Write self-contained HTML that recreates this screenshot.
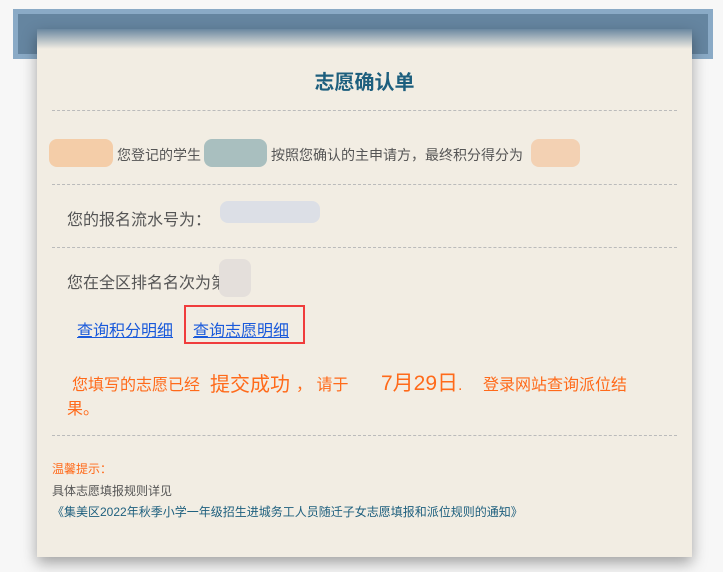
<!DOCTYPE html>
<html><head><meta charset="utf-8"><style>
body{margin:0;width:723px;height:572px;background:#f7f7f7;position:relative;overflow:hidden;font-family:"Liberation Sans","Noto Sans CJK SC",sans-serif;}
.bar{position:absolute;left:13px;top:9px;width:690px;height:40px;background:#6585a0;border:5px solid #8aaac6;}
.paper{position:absolute;left:37px;top:29px;width:655px;height:528px;background:#f2ede3;box-shadow:0 6px 14px rgba(0,0,0,.35);}
.paper:before{content:"";position:absolute;left:0;top:0;right:0;height:20px;background:linear-gradient(#6a87a0,#f2ede3);}
.hr{position:absolute;left:15px;width:625px;border-top:1px dashed #bbb;}
.t{position:absolute;white-space:nowrap;}
.o{position:absolute;white-space:nowrap;color:#ff6a1a;font-size:16px;}
.blur{position:absolute;height:28px;border-radius:8px;}
a{color:#1a5adb;}
</style></head><body>
<div class="bar"></div>
<div class="paper">
<div class="t" style="left:0;width:655px;text-align:center;top:37px;font-size:20px;font-weight:bold;color:#1d5f7e">志愿确认单</div>
<div class="hr" style="top:81px"></div>
<div class="blur" style="left:12px;top:110px;width:64px;background:#f4cda8"></div>
<div class="t" style="left:80px;top:116px;font-size:14px;color:#555">您登记的学生</div>
<div class="blur" style="left:167px;top:110px;width:63px;background:#a9bfbf"></div>
<div class="t" style="left:234px;top:116px;font-size:14px;color:#555">按照您确认的主申请方，最终积分得分为</div>
<div class="blur" style="left:494px;top:110px;width:49px;background:#f3d1b3"></div>
<div class="hr" style="top:155px"></div>
<div class="t" style="left:30px;top:177px;font-size:16px;color:#555">您的报名流水号为：</div>
<div class="blur" style="left:183px;top:172px;width:100px;height:22px;background:#dcdfe6"></div>
<div class="hr" style="top:218px"></div>
<div class="t" style="left:30px;top:240px;font-size:16px;color:#555">您在全区排名名次为第&nbsp;&nbsp;名</div>
<div class="blur" style="left:182px;top:230px;width:32px;height:38px;background:#e4dfdb"></div>
<div class="t" style="left:40px;top:288px;font-size:16px"><a href="#">查询积分明细</a></div>
<div style="position:absolute;left:147px;top:276px;width:121px;height:39px;border:2px solid #f03c3c;box-sizing:border-box"></div>
<div class="t" style="left:156px;top:288px;font-size:16px"><a href="#">查询志愿明细</a></div>
<div class="o" style="left:35px;top:342px">您填写的志愿已经</div>
<div class="o" style="left:173px;top:339px;font-size:20px">提交成功</div>
<div class="o" style="left:259px;top:342px">，&nbsp;请于</div>
<div class="o" style="left:344px;top:338px;font-size:21px">7月29日<span style="font-size:16px">.</span></div>
<div class="o" style="left:446px;top:342px">登录网站查询派位结</div>
<div class="o" style="left:30px;top:366px">果。</div>
<div class="hr" style="top:406px"></div>
<div class="t" style="left:15px;top:431px;font-size:12px;color:#ff6a1a">温馨提示：</div>
<div class="t" style="left:15px;top:453px;font-size:12px;color:#555">具体志愿填报规则详见</div>
<div class="t" style="left:15px;top:474px;font-size:12px;color:#1d5f7e">《集美区2022年秋季小学一年级招生进城务工人员随迁子女志愿填报和派位规则的通知》</div>
</div>
</body></html>
